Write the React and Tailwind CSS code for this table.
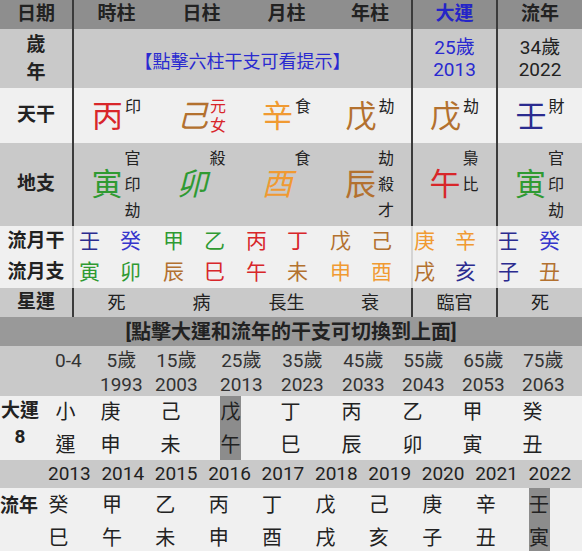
import React from 'react';

const WOOD = 'text-[#2f9a32]';
const FIRE = 'text-[#d8262a]';
const EARTH = 'text-[#b3712f]';
const METAL = 'text-[#f09a32]';
const WATER = 'text-[#2b2b8f]';
const WATER2 = 'text-[#3535cc]';

const LINE = 'border-r-2 border-[#3b3b3b]';
const SOFT = 'border-r-2 border-[#d4d4d4]';
const TOP = 'grid grid-cols-[74px_85px_85px_85px_84px_85px_1fr]';

const stems = [
  { ch: '丙', c: FIRE, sup: ['印'] },
  { ch: '己', c: EARTH, sup: ['元', '女'], supC: FIRE, italic: true },
  { ch: '辛', c: METAL, sup: ['食'] },
  { ch: '戊', c: EARTH, sup: ['劫'] },
  { ch: '戊', c: EARTH, sup: ['劫'] },
  { ch: '壬', c: WATER, sup: ['財'] },
];

const branches = [
  { ch: '寅', c: WOOD, hid: ['官', '印', '劫'] },
  { ch: '卯', c: WOOD, hid: ['殺', '', ''], italic: true },
  { ch: '酉', c: METAL, hid: ['食', '', ''], italic: true },
  { ch: '辰', c: EARTH, hid: ['劫', '殺', '才'] },
  { ch: '午', c: FIRE, hid: ['梟', '比', ''] },
  { ch: '寅', c: WOOD, hid: ['官', '印', '劫'] },
];

const monthStems = [
  ['壬', WATER], ['癸', WATER2], ['甲', WOOD], ['乙', WOOD], ['丙', FIRE], ['丁', FIRE],
  ['戊', EARTH], ['己', EARTH], ['庚', METAL], ['辛', METAL], ['壬', WATER], ['癸', WATER2],
];
const monthBranches = [
  ['寅', WOOD], ['卯', WOOD], ['辰', EARTH], ['巳', FIRE], ['午', FIRE], ['未', EARTH],
  ['申', METAL], ['酉', METAL], ['戌', EARTH], ['亥', WATER], ['子', WATER], ['丑', EARTH],
];
const monthPad = ['pl-[5px]', 'pl-[4px]', 'pl-[2px]', 'pl-[1px]', 'pl-[1px]', 'pl-0'];

const stars = ['死', '病', '長生', '衰', '臨官', '死'];

const ages = [
  ['0-4', ''], ['5歲', '1993'], ['15歲', '2003'], ['25歲', '2013'], ['35歲', '2023'],
  ['45歲', '2033'], ['55歲', '2043'], ['65歲', '2053'], ['75歲', '2063'],
];
const luck = [
  ['小', '運'], ['庚', '申'], ['己', '未'], ['戊', '午'], ['丁', '巳'],
  ['丙', '辰'], ['乙', '卯'], ['甲', '寅'], ['癸', '丑'],
];
const years = [
  ['2013', '癸', '巳'], ['2014', '甲', '午'], ['2015', '乙', '未'], ['2016', '丙', '申'],
  ['2017', '丁', '酉'], ['2018', '戊', '戌'], ['2019', '己', '亥'], ['2020', '庚', '子'],
  ['2021', '辛', '丑'], ['2022', '壬', '寅'],
];

const sepFor = (i) => (i === 3 || i === 4 ? LINE : '');

const MonthRow = ({ label, items }) => (
  <div className={`${TOP} h-[31px] bg-[#f0f0f0]`}>
    <div className={`${SOFT} flex items-center justify-center text-[19px] font-bold text-[#222]`}>{label}</div>
    {[0, 1, 2, 3, 4, 5].map((i) => (
      <div key={i} className={`flex items-center gap-[21px] ${monthPad[i]} ${i < 5 && i > 2 ? SOFT : ''}`}>
        {items.slice(i * 2, i * 2 + 2).map(([ch, c], k) => (
          <span key={k} className={`w-[20px] text-center text-[21px] leading-none ${c}`}>{ch}</span>
        ))}
      </div>
    ))}
  </div>
);

export default function App() {
  return (
    <div className="h-[551px] w-[582px] overflow-hidden bg-[#f0f0f0] font-['Roboto','Noto_Sans_CJK_TC',sans-serif] text-[#222]">
      {/* pillar header */}
      <div className={`${TOP} h-[29px] bg-[#8e8e8e] text-[19px] font-bold`}>
        <div className={`${LINE} flex items-center justify-center`}>日期</div>
        {['時柱', '日柱', '月柱', '年柱'].map((t, i) => (
          <div key={t} className={`flex items-center justify-center ${i === 3 ? LINE : ''}`}>{t}</div>
        ))}
        <div className={`${LINE} flex items-center justify-center text-[#2424c8]`}>大運</div>
        <div className="flex items-center justify-center">流年</div>
      </div>

      {/* age row */}
      <div className={`${TOP} h-[59px] bg-[#c9c9c9]`}>
        <div className={`${LINE} flex flex-col items-center justify-center text-[19px] font-bold leading-[28px]`}>
          <span>歲</span>
          <span>年</span>
        </div>
        <div className={`${LINE} col-span-4 flex items-center justify-center pt-[6px] text-[18px] text-[#2a2ad0]`}>
          【點擊六柱干支可看提示】
        </div>
        <div className={`${LINE} flex flex-col items-center justify-center text-[19px] leading-[22px] text-[#2a2ad0]`}>
          <span>25歲</span>
          <span>2013</span>
        </div>
        <div className="flex flex-col items-center justify-center text-[19px] leading-[22px] text-[#222]">
          <span>34歲</span>
          <span>2022</span>
        </div>
      </div>

      {/* heavenly stems */}
      <div className={`${TOP} h-[55px] bg-[#f0f0f0]`}>
        <div className={`${LINE} flex items-center justify-center text-[19px] font-bold`}>天干</div>
        {stems.map((s, i) => (
          <div key={i} className={`flex items-start justify-center pt-[9px] ${sepFor(i)}`}>
            <span className={`text-[31px] leading-[40px] ${s.c} ${s.italic ? 'italic' : ''}`}>{s.ch}</span>
            <span className={`ml-[2px] flex flex-col text-[16px] leading-[19px] ${s.supC || 'text-[#222]'}`}>
              {s.sup.map((t) => (
                <span key={t}>{t}</span>
              ))}
            </span>
          </div>
        ))}
      </div>

      {/* earthly branches */}
      <div className={`${TOP} h-[83px] bg-[#c9c9c9]`}>
        <div className={`${LINE} flex items-center justify-center text-[19px] font-bold`}>地支</div>
        {branches.map((b, i) => (
          <div key={i} className={`flex items-center justify-center ${sepFor(i)}`}>
            <span className={`text-[31px] leading-[40px] ${b.c} ${b.italic ? 'italic' : ''}`}>{b.ch}</span>
            <span className="ml-[2px] flex flex-col text-[16px] leading-[26px] text-[#222]">
              {b.hid.map((t, k) => (
                <span key={k} className="h-[26px] w-[17px]">{t}</span>
              ))}
            </span>
          </div>
        ))}
      </div>

      <MonthRow label="流月干" items={monthStems} />
      <MonthRow label="流月支" items={monthBranches} />

      {/* star fortune */}
      <div className={`${TOP} h-[29px] bg-[#c9c9c9] text-[18px]`}>
        <div className={`${LINE} flex items-center justify-center text-[19px] font-bold`}>星運</div>
        {stars.map((t, i) => (
          <div key={i} className={`flex items-center justify-center ${sepFor(i)}`}>{t}</div>
        ))}
      </div>

      {/* luck pillars */}
      <div className="flex h-[29px] items-center justify-center bg-[#999999] text-[20px] font-bold">
        [點擊大運和流年的干支可切換到上面]
      </div>

      <div className="grid h-[50px] grid-cols-[55px_45px_55px_65px_61px_61px_60px_60px_60px_1fr] bg-[#c9c9c9] pt-[3px] text-[19px] leading-[24px] text-[#333]">
        <div />
        {ages.map(([a, y]) => (
          <div key={a} className="flex">
            <div className="flex flex-col items-center">
              <span>{a}</span>
              <span>{y}</span>
            </div>
          </div>
        ))}
      </div>

      <div className="grid h-[64px] grid-cols-[55px_45px_60px_61px_59px_61px_61px_60px_60px_1fr] bg-[#f0f0f0] text-[20px] leading-[33px] text-[#222]">
        <div className="flex w-[40px] flex-col items-center pt-[2px] text-[19px] font-bold leading-[26px]">
          <span>大運</span>
          <span>8</span>
        </div>
        {luck.map(([s, b], i) => (
          <div key={i} className="flex">
            <div className={`flex h-[64px] w-[21px] flex-col items-center ${i === 3 ? '-ml-[1px] bg-[#8c8c8c]' : ''}`}>
              <span>{s}</span>
              <span>{b}</span>
            </div>
          </div>
        ))}
      </div>

      {/* flowing years */}
      <div className="grid h-[28px] grid-cols-[48px_repeat(10,53.4px)] items-center bg-[#c9c9c9] text-[19px] text-[#222]">
        <div />
        {years.map(([y]) => (
          <div key={y}>{y}</div>
        ))}
      </div>

      <div className="grid h-[63px] grid-cols-[48px_repeat(10,53.4px)] bg-[#f0f0f0] text-[20px] leading-[33px] text-[#222]">
        <div className="pt-[1px] text-[19px] font-bold">流年</div>
        {years.map(([y, s, b], i) => (
          <div key={y} className="flex">
            <div className={`flex h-[63px] w-[21px] flex-col items-center pt-[1px] ${i === 9 ? 'bg-[#8c8c8c]' : ''}`}>
              <span>{s}</span>
              <span>{b}</span>
            </div>
          </div>
        ))}
      </div>
    </div>
  );
}
